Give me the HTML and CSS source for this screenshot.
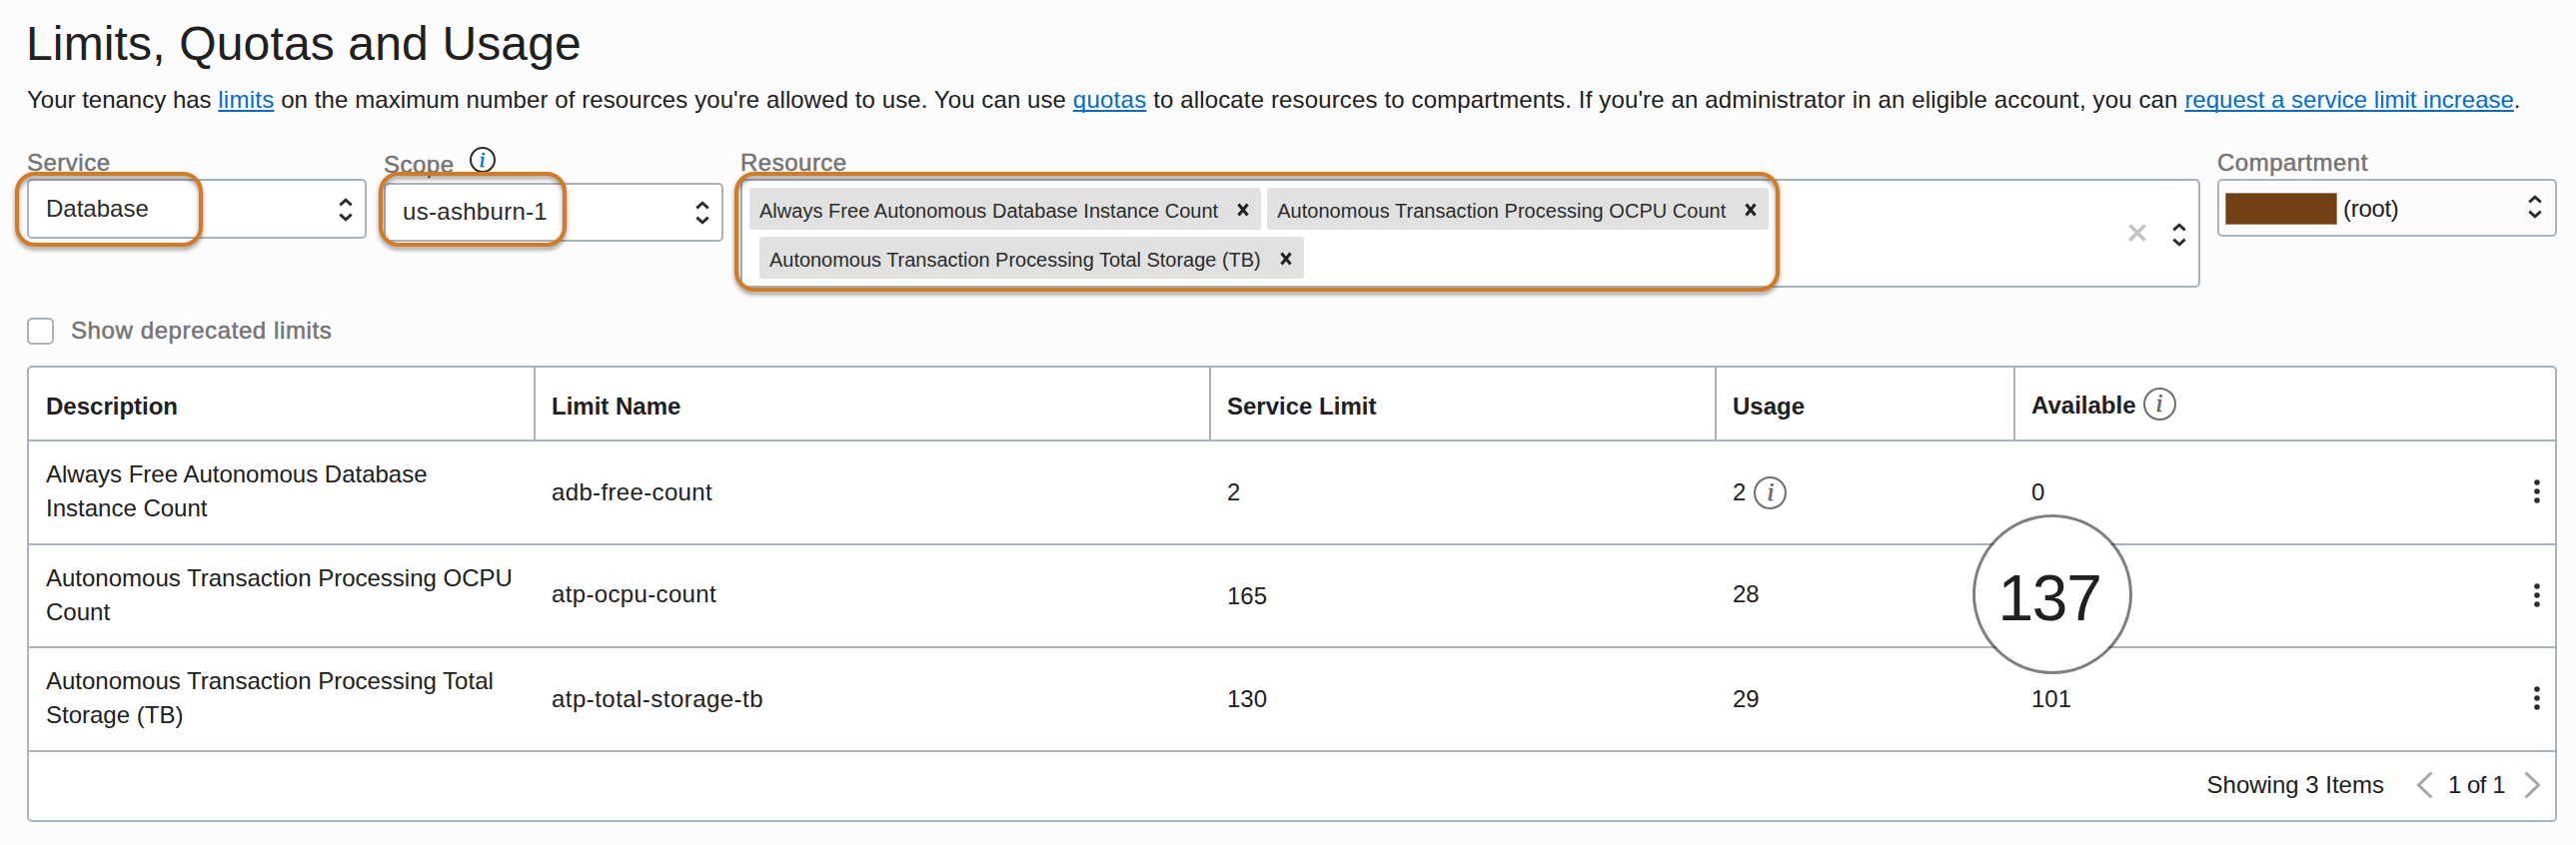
FILE: index.html
```html
<!DOCTYPE html>
<html lang="en">
<head>
<meta charset="utf-8">
<title>Limits, Quotas and Usage</title>
<link rel="stylesheet" href="styles.css">
</head>
<body>
<svg class="defs" width="0" height="0">
  <symbol id="updown" viewBox="0 0 14 24"><path d="M1.300 7.400 7 2.200l5.700 5.200M1.300 16.600 7 21.800l5.700-5.200" fill="none" stroke="currentColor" stroke-width="2.800"/></symbol>
  <symbol id="cross" viewBox="0 0 12 14"><path d="M1.500 1.500 10.500 12.500M10.500 1.500 1.500 12.500" fill="none" stroke="currentColor" stroke-width="3"/></symbol>
  <symbol id="dots" viewBox="0 0 6 24"><circle cx="3" cy="3" r="2.800"/><circle cx="3" cy="12" r="2.800"/><circle cx="3" cy="21" r="2.800"/></symbol>
</svg>
<main class="page">
  <h1 class="title">Limits, Quotas and Usage</h1>
  <p class="intro">Your tenancy has <a class="link" href="#">limits</a><span class="seg-a"> on the maximum number of resources you're allowed to use. You can use </span><a class="link" href="#">quotas</a><span class="seg-b"> to allocate resources to compartments. If you're an administrator in an eligible account, you can </span><a class="link long" href="#">request a service limit increase</a>.</p>

  <section class="filters">
    <div class="field">
      <label class="label">Service</label>
      <div class="select service"><span>Database</span><svg class="updown"><use href="#updown"/></svg></div>
      <div class="mark mark-service"></div>
    </div>
    <div class="field">
      <label class="label label-scope">Scope<span class="info info-small">i</span></label>
      <div class="select scope"><span class="scope-value">us-ashburn-1</span><svg class="updown"><use href="#updown"/></svg></div>
      <div class="mark mark-scope"></div>
    </div>
    <div class="field">
      <label class="label">Resource</label>
      <div class="select resource">
        <div class="tags">
          <div class="tag-row">
            <span class="tag"><span class="tag-text">Always Free Autonomous Database Instance Count</span><svg class="cross"><use href="#cross"/></svg></span>
            <span class="tag"><span class="tag-text">Autonomous Transaction Processing OCPU Count</span><svg class="cross"><use href="#cross"/></svg></span>
          </div>
          <div class="tag-row second">
            <span class="tag"><span class="tag-text tight">Autonomous Transaction Processing Total Storage (TB)</span><svg class="cross"><use href="#cross"/></svg></span>
          </div>
        </div>
        <svg class="clear" viewBox="0 0 18 18"><path d="M2.500 2.500 15.500 15.500M15.500 2.500 2.500 15.500" fill="none" stroke="#c4c4c4" stroke-width="3.800" stroke-linecap="round"/></svg>
        <svg class="updown"><use href="#updown"/></svg>
      </div>
      <div class="mark mark-resource"></div>
    </div>
    <div class="field">
      <label class="label">Compartment</label>
      <div class="select compartment"><span class="redacted"></span><span class="root">(root)</span><svg class="updown"><use href="#updown"/></svg></div>
    </div>
  </section>

  <label class="deprecated"><span class="checkbox"></span>Show deprecated limits</label>

  <section class="table">
    <div class="row head">
      <div class="cell">Description</div>
      <div class="cell">Limit Name</div>
      <div class="cell">Service Limit</div>
      <div class="cell">Usage</div>
      <div class="cell available">Available<span class="info">i</span></div>
    </div>
    <div class="row">
      <div class="cell desc">Always Free Autonomous Database Instance Count</div>
      <div class="cell name">adb-free-count</div>
      <div class="cell">2</div>
      <div class="cell usage">2<span class="info">i</span></div>
      <div class="cell last">0<svg class="dots"><use href="#dots"/></svg></div>
    </div>
    <div class="row middle">
      <div class="cell desc">Autonomous Transaction Processing OCPU Count</div>
      <div class="cell name raised">atp-ocpu-count</div>
      <div class="cell">165</div>
      <div class="cell raised">28</div>
      <div class="cell last"><svg class="dots"><use href="#dots"/></svg><div class="lens"><span class="lens-text">137</span></div></div>
    </div>
    <div class="row">
      <div class="cell desc">Autonomous Transaction Processing Total Storage (TB)</div>
      <div class="cell name wide">atp-total-storage-tb</div>
      <div class="cell">130</div>
      <div class="cell">29</div>
      <div class="cell last">101<svg class="dots"><use href="#dots"/></svg></div>
    </div>
    <div class="footer">
      <span>Showing 3 Items</span>
      <svg class="prev" viewBox="0 0 17 28"><path d="M15.500 1.500 2.500 14l13 12.500" fill="none" stroke="#a5a5a5" stroke-width="3"/></svg>
      <span class="pages">1 of 1</span>
      <svg class="next" viewBox="0 0 17 28"><path d="M1.500 1.500 14.500 14l-13 12.500" fill="none" stroke="#a5a5a5" stroke-width="3"/></svg>
    </div>
  </section>
</main>
</body>
</html>
```
FILE: styles.css
```css
* { box-sizing: border-box; }

body {
  margin: 0;
  background: #fcfcfc;
  color: #202020;
  font: 24px/34px "Liberation Sans", Arial, sans-serif;
}

.defs { position: absolute; }

.page { padding: 14px 19px 0 27px; height: 846px; }

.title {
  margin: 0 0 9px -1px;
  font-size: 48px;
  line-height: 60px;
  font-weight: 400;
  letter-spacing: .15px;
}

.intro { margin: 0 0 29px; white-space: nowrap; }
.link {
  color: #006dcc;
  letter-spacing: .25px;
  text-decoration: underline;
  text-decoration-thickness: 2px;
  text-underline-offset: 2px;
  text-decoration-skip-ink: none;
}
.link.long { letter-spacing: 0; }
.seg-a { letter-spacing: .09px; }
.seg-b { letter-spacing: .14px; }

.filters {
  display: grid;
  grid-template-columns: 340px 340px 1461px 340px;
  column-gap: 17px;
  align-items: start;
}
.field { position: relative; }

.label {
  display: flex;
  align-items: center;
  height: 33px;
  line-height: 33px;
  color: #747474;
  letter-spacing: .5px;
  -webkit-text-stroke: .5px #747474;
}
.label-scope { height: 37px; line-height: 37px; }

.info {
  display: inline-flex;
  justify-content: center;
  align-items: center;
  width: 33px;
  height: 33px;
  border: 2px solid #6e6e6e;
  border-radius: 50%;
  color: #666;
  font: italic 400 25px/28px "Liberation Serif", serif;
  letter-spacing: 0;
  -webkit-text-stroke: .6px currentColor;
}
.info-small {
  width: 26px;
  height: 26px;
  margin: 0 0 9px 15px;
  border: 2px solid #2b2b2b;
  color: #006dcc;
  font-size: 20px;
  line-height: 20px;
}

.select {
  display: flex;
  align-items: center;
  justify-content: space-between;
  padding: 0 12px 0 17px;
  border: 2px solid #a7b2bc;
  border-radius: 5px;
  background: #fff;
  color: #2b2b2b;
}
.service { height: 60px; }
.scope { height: 59px; }
.scope-value { margin-top: -1px; letter-spacing: .3px; }
.updown { width: 14px; height: 24px; color: #2b2b2b; flex: none; }
.service .updown { margin-top: 1px; }

.resource { height: 109px; padding: 7px 12px 0 7px; align-items: flex-start; }
.tags { display: grid; row-gap: 7px; }
.tag-row { display: flex; column-gap: 6px; }
.second { padding-left: 10px; }
.tag {
  display: flex;
  align-items: flex-start;
  height: 42px;
  padding: 4px 12px 0 10px;
  border-radius: 3px;
  background: #e1e1e1;
  font-size: 20px;
  line-height: 38px;
}
.tag-text { letter-spacing: .025px; }
.tag-text.tight { letter-spacing: -.03px; }
.cross { width: 12px; height: 14px; margin: 11px 0 0 19px; color: #202020; }
.clear { width: 18px; height: 18px; margin: 36px 26px 0 auto; }
.resource .updown { margin-top: 35px; }

.compartment { height: 58px; padding: 0 13px 0 6px; background: #fcfcfc; justify-content: flex-start; }
.redacted { width: 112px; height: 32px; margin-top: 1px; background: #703f12; border: 1px solid #a98661; }
.root { margin: 2px 0 0 6px; letter-spacing: -.3px; color: #202020; }
.compartment .updown { margin: 0 0 2px auto; }

.mark {
  position: absolute;
  top: 26px;
  border: 4px solid #d67a22;
  border-radius: 20px;
  filter: drop-shadow(0 3px 2px rgba(0, 0, 0, .4));
}
.mark-service { left: -12px; width: 188px; height: 75px; }
.mark-scope { left: -5px; width: 188px; height: 75px; }
.mark-resource { left: -6px; width: 1046px; height: 120px; }

.deprecated {
  display: flex;
  align-items: center;
  height: 34px;
  margin: 26px 0 18px;
  color: #747474;
  letter-spacing: .6px;
  -webkit-text-stroke: .5px #747474;
}
.checkbox {
  width: 27px;
  height: 27px;
  margin-right: 17px;
  border: 2px solid #a7b2bc;
  border-radius: 5px;
  background: #fff;
}

.table {
  border: 2px solid #a7b2bc;
  border-radius: 5px;
  background: #fff;
}
.row {
  display: grid;
  grid-template-columns: 505px 676px 506px 299px 542px;
  height: 104px;
  border-bottom: 2px solid #a7b2bc;
}
.row.middle { height: 103px; }
.cell {
  display: flex;
  align-items: center;
  padding-left: 16px;
  border-left: 2px solid transparent;
}
.cell:first-child { border-left: 0; padding-left: 17px; }
.head { height: 74px; font-weight: 700; }
.head .cell { padding-top: 5px; border-left-color: #a7b2bc; }
.head .available { padding-top: 4px; }
.available .info { margin: 0 0 4px 7px; }
.desc { padding: 0 16px 2px 17px; }
.name { letter-spacing: .35px; }
.name.wide { letter-spacing: .46px; }
.raised { padding-bottom: 3px; }
.usage .info { margin-left: 8px; }
.last { position: relative; padding-right: 15px; }
.dots { width: 6px; height: 24px; margin: 0 0 2px auto; fill: #2b2b2b; }

.lens {
  position: absolute;
  left: -43px;
  top: -31px;
  z-index: 1;
  display: flex;
  justify-content: center;
  align-items: center;
  width: 160px;
  height: 160px;
  border: 3px solid rgba(0, 0, 0, .5);
  border-radius: 50%;
  background: #fff;
  background-clip: padding-box;
}
.lens-text { margin: 8px 6px 0 0; font-size: 64px; line-height: 72px; letter-spacing: -1.200px; filter: blur(.6px); }

.footer {
  display: flex;
  align-items: center;
  justify-content: flex-end;
  height: 68px;
  padding: 0 14px 2px 0;
}
.prev, .next { width: 17px; height: 28px; }
.prev { margin: 0 15px 0 32px; }
.pages { letter-spacing: -.5px; }
.next { margin-left: 19px; }
```
